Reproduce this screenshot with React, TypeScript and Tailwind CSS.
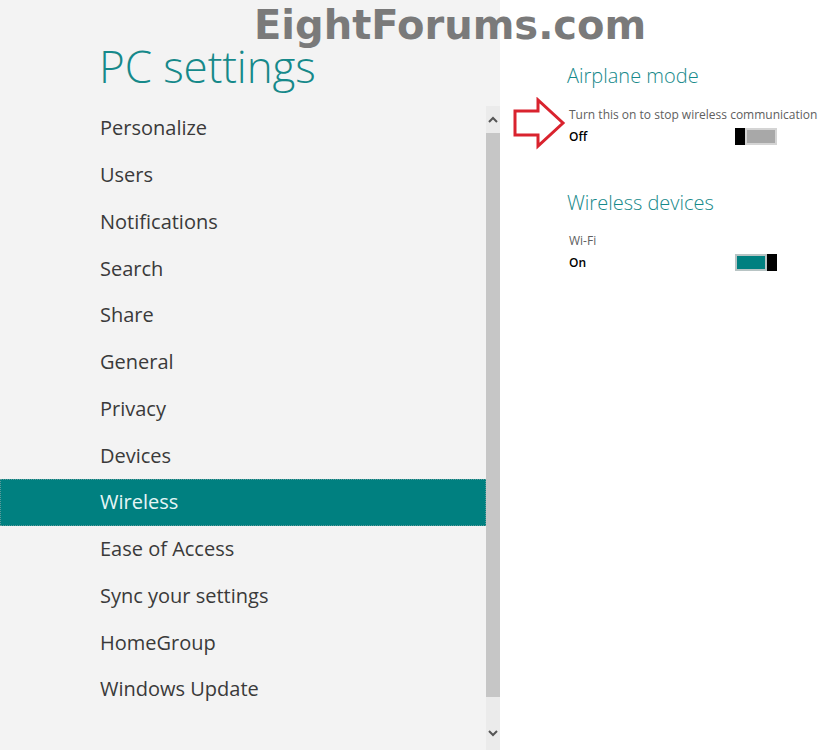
const ITEMS = [
  'Personalize',
  'Users',
  'Notifications',
  'Search',
  'Share',
  'General',
  'Privacy',
  'Devices',
  'Wireless',
  'Ease of Access',
  'Sync your settings',
  'HomeGroup',
  'Windows Update',
]

function Toggle({ on }: { on: boolean }) {
  return (
    <div className="w-[42px] h-[17px] flex">
      {on ? (
        <>
          <div className="flex-1 border-2 border-[#b8c4c4] bg-[#008080]" />
          <div className="w-[10px] bg-black" />
        </>
      ) : (
        <>
          <div className="w-[10px] bg-black" />
          <div className="flex-1 border-2 border-[#d4d4d4] bg-[#a8a8a8]" />
        </>
      )}
    </div>
  )
}

function Setting({ label, state, on }: { label: string; state: string; on: boolean }) {
  return (
    <div className="flex flex-col">
      <div className="text-[12px] leading-[16px] text-[#606060]">{label}</div>
      <div className="flex items-center justify-between w-[208px] mt-[5px]">
        <span className="text-[12px] leading-[16px] font-semibold text-black">{state}</span>
        <Toggle on={on} />
      </div>
    </div>
  )
}

export default function App() {
  return (
    <div
      className="relative w-[836px] h-[750px] flex overflow-hidden"
      style={{ fontFamily: '"Open Sans", "Noto Sans", sans-serif' }}
    >
      {/* ── Left: settings list ── */}
      <div className="w-[500px] h-full bg-[#f3f3f3] flex">
        <div className="w-[486px] flex flex-col">
          <h1 className="pl-[99px] pt-[38px] text-[44px] leading-[56px] font-light text-[#16898a] tracking-[-0.1px]">
            PC settings
          </h1>
          <ul className="mt-[11px] flex flex-col">
            {ITEMS.map((item) => (
              <li
                key={item}
                className={
                  item === 'Wireless'
                    ? 'h-[46.75px] flex items-center pl-[99px] text-[20px] text-[#e6f6f6] bg-[#008080] border border-dotted border-[#5c9a9a]'
                    : 'h-[46.75px] flex items-center pl-[100px] text-[20px] text-[#3a3a3a]'
                }
              >
                {item}
              </li>
            ))}
          </ul>
        </div>

        {/* Scrollbar */}
        <div className="w-[14px] mt-[106px] flex flex-col bg-[#ebebeb]">
          <div className="h-[27px] flex items-center justify-center text-[#555]">
            <svg width="10" height="8" viewBox="0 0 10 8">
              <path d="M1 6 L5 2 L9 6" fill="none" stroke="currentColor" strokeWidth="2" />
            </svg>
          </div>
          <div className="h-[564px] bg-[#c6c6c6]" />
          <div className="flex-1 flex items-end justify-center pb-[13px] text-[#555]">
            <svg width="10" height="8" viewBox="0 0 10 8">
              <path d="M1 2 L5 6 L9 2" fill="none" stroke="currentColor" strokeWidth="2" />
            </svg>
          </div>
        </div>
      </div>

      {/* ── Right: wireless settings ── */}
      <div className="flex-1 h-full bg-white pl-[67px] pt-[62px] flex flex-col">
        <h2 className="text-[20px] leading-[28px] font-light text-[#16898a]">Airplane mode</h2>
        <div className="mt-[17px] pl-[2px]">
          <Setting label="Turn this on to stop wireless communication" state="Off" on={false} />
        </div>
        <h2 className="mt-[44px] text-[20px] leading-[28px] font-light text-[#16898a]">Wireless devices</h2>
        <div className="mt-[16px] pl-[2px]">
          <Setting label="Wi-Fi" state="On" on={true} />
        </div>
      </div>

      {/* Red arrow callout */}
      <svg className="absolute left-[512px] top-[97px]" width="54" height="54" viewBox="0 0 54 54">
        <path
          d="M3 14 L26 14 L26 3 L51 26 L26 49 L26 38 L3 38 Z"
          fill="none"
          stroke="#d9232e"
          strokeWidth="3"
          strokeLinejoin="miter"
        />
      </svg>

      {/* Watermark */}
      <div
        className="absolute left-[254px] top-[0px] text-[40px] leading-[50px] font-bold text-[#7a7a7a]"
        style={{ fontFamily: '"DejaVu Sans", Verdana, sans-serif' }}
      >
        EightForums.com
      </div>
    </div>
  )
}
